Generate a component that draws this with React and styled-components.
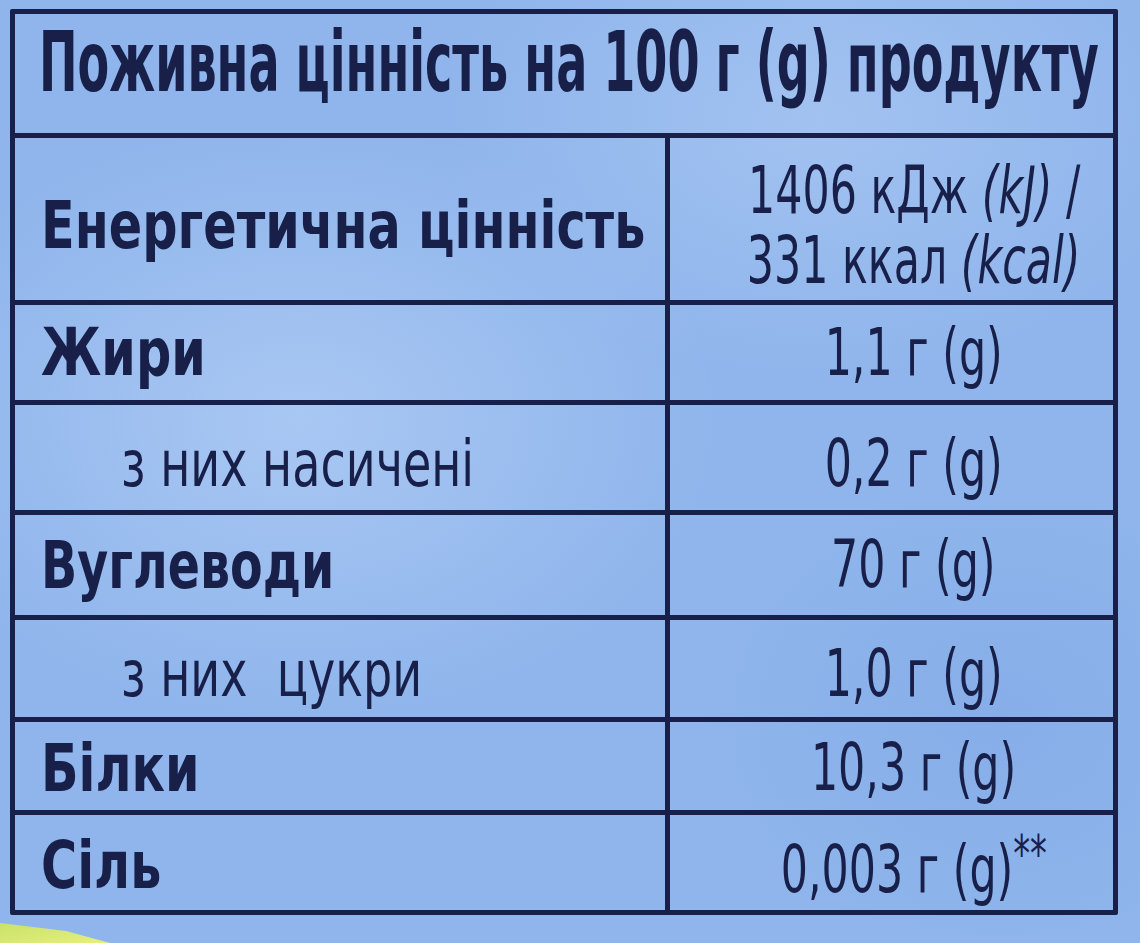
import React from 'react';
import styled, { createGlobalStyle } from 'styled-components';

const GlobalStyle = createGlobalStyle`
  html, body {
    margin: 0;
    padding: 0;
    background: #8fb5ec;
  }
`;

const ink = '#18204a';

const Page = styled.div`
  position: relative;
  width: 1140px;
  height: 943px;
  overflow: hidden;
  box-sizing: border-box;
  padding: 9px 22px 0 10px;
  font-family: "DejaVu Sans Condensed", "Liberation Sans Narrow", "Liberation Sans", sans-serif;
  color: ${ink};
  background:
    radial-gradient(ellipse 420px 300px at 300px 420px, rgba(190, 214, 248, .55), rgba(190, 214, 248, 0)),
    radial-gradient(ellipse 380px 260px at 820px 120px, rgba(185, 210, 246, .45), rgba(185, 210, 246, 0)),
    radial-gradient(ellipse 300px 240px at 1000px 720px, rgba(120, 160, 225, .35), rgba(120, 160, 225, 0)),
    #8fb5ec;
`;

// жовтий край упаковки в лівому нижньому куті
const Corner = styled.div`
  position: absolute;
  left: 0;
  bottom: 0;
  width: 110px;
  height: 20px;
  background: linear-gradient(170deg, #c9e26a, #e6ef7e);
  clip-path: polygon(0 0, 60% 40%, 100% 100%, 0 100%);
`;

const Label = styled.div`
  border: 5px solid ${ink};
  border-radius: 2px;
  overflow: hidden;
`;

// шрифт на упаковці вузький, тому стискаємо текст по горизонталі
const Squeeze = styled.span`
  display: inline-block;
  flex: none;
  transform: scaleX(${p => p.$k});
  transform-origin: ${p => p.$origin || 'left'} center;
  white-space: pre;
`;

const Header = styled.div`
  height: 124px;
  display: flex;
  align-items: center;
  padding: 0 0 24px 24px;
  box-sizing: border-box;
  font-size: 84px;
  font-weight: 700;
  white-space: nowrap;
  border-bottom: 5px solid ${ink};
`;

const Table = styled.div`
  display: grid;
  grid-template-columns: 655px minmax(0, 1fr);
`;

const Cell = styled.div`
  min-width: 0;
  height: ${p => p.$h}px;
  box-sizing: border-box;
  display: flex;
  align-items: center;
  white-space: nowrap;
  border-bottom: ${p => (p.$last ? 'none' : `5px solid ${ink}`)};
`;

const Name = styled(Cell)`
  padding-left: ${p => (p.$sub ? 106 : 26)}px;
  padding-top: ${p => p.$dy || 0}px;
  font-size: ${p => (p.$sub ? 64 : 66)}px;
  font-weight: ${p => (p.$sub ? 400 : 700)};
  border-right: 5px solid ${ink};
`;

const Value = styled(Cell)`
  justify-content: center;
  padding-left: 44px;
  padding-top: ${p => p.$dy || 0}px;
  font-size: 66px;
  line-height: 70px;
`;

const ValueLines = styled.div`
  display: flex;
  flex-direction: column;
  align-items: flex-end;
`;

const Unit = styled.span`
  font-style: italic;
  font-weight: 300;
`;

const Stars = styled.sup`
  font-size: 52px;
  line-height: 0;
  vertical-align: 20px;
`;

const rows = [
  { name: 'Жири', value: '1,1 г (g)', h: 100 },
  { name: 'з них насичені', value: '0,2 г (g)', h: 110, sub: true, dy: 12 },
  { name: 'Вуглеводи', value: '70 г (g)', h: 105, k: 0.8 },
  { name: 'з них  цукри', value: '1,0 г (g)', h: 102, sub: true, dy: 10 },
  { name: 'Білки', value: '10,3 г (g)', h: 93, dy: 4 },
];

export default function App() {
  return (
    <Page>
      <GlobalStyle />
      <Label>
        <Header>
          <Squeeze $k={0.61}>Поживна цінність на 100 г (g) продукту</Squeeze>
        </Header>
        <Table>
          <Name $h={167} $dy={12}>
            <Squeeze $k={0.83}>Енергетична цінність</Squeeze>
          </Name>
          <Value $h={167} $dy={14}>
            <Squeeze $k={0.72} $origin="center">
              <ValueLines>
                <span>1406 кДж <Unit>(kJ)</Unit> /</span>
                <span>331 ккал <Unit>(kcal)</Unit></span>
              </ValueLines>
            </Squeeze>
          </Value>
          {rows.map(r => (
            <React.Fragment key={r.name}>
              <Name $h={r.h} $sub={r.sub} $dy={r.dy}>
                <Squeeze $k={r.k || (r.sub ? 0.8 : 0.83)}>{r.name}</Squeeze>
              </Name>
              <Value $h={r.h} $dy={r.dy}>
                <Squeeze $k={0.72} $origin="center">{r.value}</Squeeze>
              </Value>
            </React.Fragment>
          ))}
          <Name $h={95} $dy={6} $last>
            <Squeeze $k={0.83}>Сіль</Squeeze>
          </Name>
          <Value $h={95} $dy={14} $last>
            <Squeeze $k={0.72} $origin="center">
              0,003 г (g)<Stars>**</Stars>
            </Squeeze>
          </Value>
        </Table>
      </Label>
      <Corner />
    </Page>
  );
}
